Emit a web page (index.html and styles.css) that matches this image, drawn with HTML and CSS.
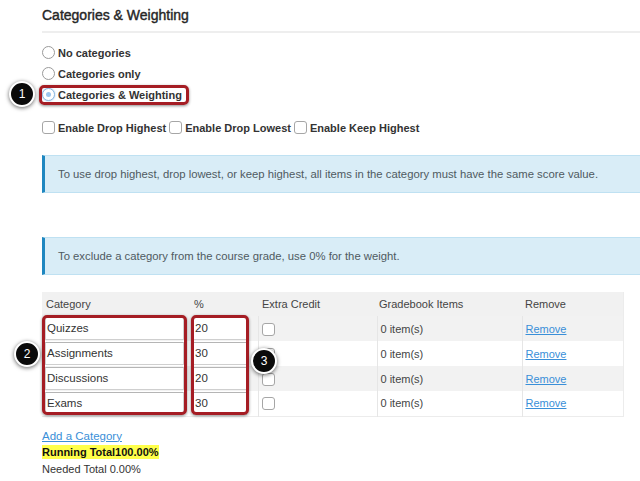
FILE: index.html
```html
<!DOCTYPE html>
<html>
<head>
<meta charset="utf-8">
<link rel="stylesheet" href="styles.css">
</head>
<body>
<div class="page">
  <h1 class="title">Categories &amp; Weighting</h1>

  <div class="options">
    <div class="opt"><span class="radio"></span><span>No categories</span></div>
    <div class="opt"><span class="radio"></span><span>Categories only</span></div>
    <div class="opt"><span class="radio checked"></span><span>Categories &amp; Weighting</span></div>
  </div>

  <div class="checks">
    <span class="cb"></span><span>Enable Drop Highest</span>
    <span class="cb"></span><span>Enable Drop Lowest</span>
    <span class="cb"></span><span>Enable Keep Highest</span>
  </div>

  <div class="alert first">To use drop highest, drop lowest, or keep highest, all items in the category must have the same score value.</div>
  <div class="alert second">To exclude a category from the course grade, use 0% for the weight.</div>

  <table class="cats">
    <colgroup>
      <col class="c1"><col class="c2"><col class="c3"><col class="c4"><col class="c5">
    </colgroup>
    <thead>
      <tr><th>Category</th><th>%</th><th>Extra Credit</th><th class="gi">Gradebook Items</th><th class="rm">Remove</th></tr>
    </thead>
    <tbody>
      <tr class="odd"><td><span class="inp name">Quizzes</span></td><td><span class="inp pct">20</span></td><td class="sep"><span class="cb"></span></td><td class="sep gi">0 item(s)</td><td class="sep rm"><a href="#">Remove</a></td></tr>
      <tr><td><span class="inp name">Assignments</span></td><td><span class="inp pct">30</span></td><td class="sep"><span class="cb"></span></td><td class="sep gi">0 item(s)</td><td class="sep rm"><a href="#">Remove</a></td></tr>
      <tr class="odd"><td><span class="inp name">Discussions</span></td><td><span class="inp pct">20</span></td><td class="sep"><span class="cb"></span></td><td class="sep gi">0 item(s)</td><td class="sep rm"><a href="#">Remove</a></td></tr>
      <tr><td><span class="inp name">Exams</span></td><td><span class="inp pct">30</span></td><td class="sep"><span class="cb"></span></td><td class="sep gi">0 item(s)</td><td class="sep rm"><a href="#">Remove</a></td></tr>
    </tbody>
  </table>

  <div class="footer">
    <a href="#" class="add">Add a Category</a>
    <div><span class="running">Running Total100.00%</span></div>
    <div class="needed">Needed Total 0.00%</div>
  </div>

  <div class="hl hl-radio"></div>
  <div class="hl hl-names"></div>
  <div class="hl hl-pcts"></div>

  <div class="callout co1">1</div>
  <div class="callout co2">2</div>
  <div class="callout co3">3</div>
</div>
</body>
</html>
```

FILE: styles.css
```css
html, body {
  margin: 0;
  padding: 0;
  background: #fff;
}

.page {
  position: relative;
  width: 598px;
  height: 481px;
  padding-left: 42px;
  font-family: "Liberation Sans", Arial, sans-serif;
  font-size: 11px;
  color: #333;
  overflow: hidden;
}

.title {
  margin: 0;
  padding-top: 7px;
  height: 24px;
  line-height: 17px;
  font-size: 14px;
  font-weight: normal;
  color: #262626;
  border-bottom: 2px solid #eeeeee;
  -webkit-text-stroke: 0.4px #262626;
}

.options {
  margin-top: 9px;
}

.opt {
  display: flex;
  align-items: center;
  height: 21px;
  font-weight: bold;
  color: #333;
}

.radio {
  width: 11px;
  height: 11px;
  border: 1px solid #9a9a9a;
  border-radius: 50%;
  background: #fff;
  margin-right: 3px;
  position: relative;
  box-sizing: content-box;
}

.radio.checked {
  border-color: #8db8e0;
  box-shadow: 0 0 2px rgba(80, 150, 220, 0.6);
}

.radio.checked::after {
  content: "";
  position: absolute;
  left: 3px;
  top: 3px;
  width: 5px;
  height: 5px;
  border-radius: 50%;
  background: #9cc6ee;
}

.checks {
  margin-top: 12px;
  height: 21px;
  display: flex;
  align-items: center;
  font-weight: bold;
  color: #333;
}

.checks .cb {
  margin-right: 3px;
}

.checks span:not(.cb) {
  margin-right: 3px;
}

.cb {
  display: inline-block;
  width: 11px;
  height: 11px;
  border: 1px solid #a6a6a6;
  border-radius: 3px;
  background: #fff;
}

.alert {
  height: 36px;
  line-height: 36px;
  background: #d9edf7;
  border-top: 1px solid #bfe1f2;
  border-bottom: 1px solid #bfe1f2;
  border-left: 3px solid #1f87c0;
  padding-left: 13px;
  color: #4f5a61;
  font-size: 11.3px;
  margin-right: -2px;
}

.alert.first {
  margin-top: 17px;
}

.alert.second {
  margin-top: 44px;
}

.cats {
  margin-top: 17px;
  width: 581px;
  border-collapse: collapse;
  table-layout: fixed;
  border-right: 1px solid #ececec;
  border-bottom: 1px solid #ececec;
  font-size: 11px;
  color: #444;
}

.c1 { width: 148px; }
.c2 { width: 68px; }
.c3 { width: 119px; }
.c4 { width: 145px; }
.c5 { width: 101px; }

.cats thead tr {
  background: #f1f1f1;
  height: 24px;
}

.cats th {
  font-weight: normal;
  text-align: left;
  padding: 0 4px;
  color: #444;
}

.cats th.gi, .cats td.gi { padding-left: 2px; }
.cats th.rm, .cats td.rm { padding-left: 3px; }

.cats tbody tr {
  height: 25px;
  background: #fff;
}

.cats tbody tr.odd {
  background: #f2f2f2;
}

.cats td {
  padding: 0 3px;
  vertical-align: middle;
}

.cats td.sep {
  border-left: 1px solid #e6e6e6;
  padding-left: 3px;
}

.cats td.sep .cb {
  display: block;
  margin-top: 1px;
}

.inp {
  display: block;
  box-sizing: border-box;
  height: 23px;
  line-height: 21px;
  background: #fff;
  border: 1px solid #cfcfcf;
  border-top-color: #b5b5b5;
  padding: 0 1px;
  color: #333;
  font-size: 11.5px;
}

.inp.name { width: 139px; }
.inp.pct { width: 54px; }

.cats a {
  color: #3a8fd8;
  text-decoration: underline;
}

.footer {
  margin-top: 11px;
  line-height: 16.5px;
}

.add {
  color: #3a8fd8;
  text-decoration: underline;
  font-size: 11.5px;
}

.running {
  background: #ffff4a;
  font-weight: bold;
  color: #111;
  padding: 1px 0;
}

.needed {
  color: #333;
}

/* highlight boxes */
.hl {
  position: absolute;
  border: 3px solid #a51d24;
  border-radius: 5px;
  box-shadow: 0 1px 3px rgba(0, 0, 0, 0.45);
  box-sizing: border-box;
}

.hl-radio {
  left: 39px;
  top: 85px;
  width: 150px;
  height: 20px;
}

.hl-names {
  left: 42px;
  top: 315px;
  width: 145px;
  height: 100px;
}

.hl-pcts {
  left: 191px;
  top: 315px;
  width: 58px;
  height: 100px;
}

/* callouts */
.callout {
  position: absolute;
  width: 22px;
  height: 22px;
  border-radius: 50%;
  background: #0a0a0a;
  border: 2px solid #fff;
  box-shadow: 0 1px 4px rgba(0, 0, 0, 0.6);
  color: #fff;
  font-size: 12px;
  line-height: 22px;
  text-align: center;
}

.co1 { left: 9px; top: 81px; }
.co2 { left: 14px; top: 341px; }
.co3 { left: 251px; top: 348px; }
```
